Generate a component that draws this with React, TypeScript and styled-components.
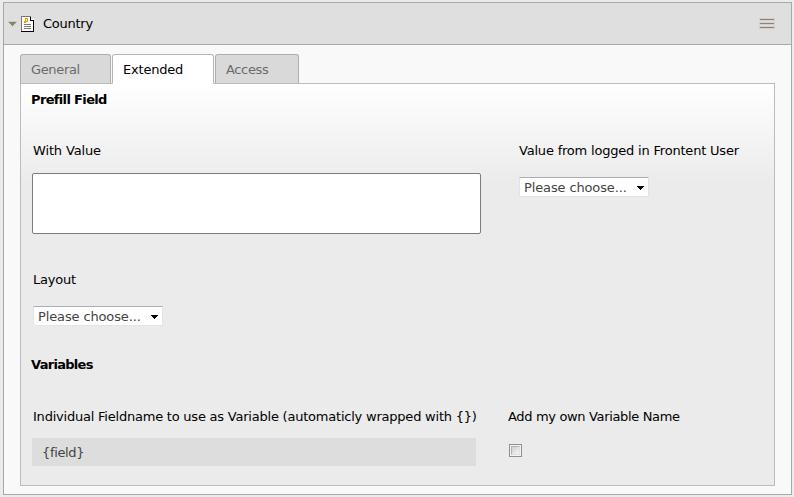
import React from "react";
import styled, { createGlobalStyle } from "styled-components";

const GlobalStyle = createGlobalStyle`
  *, *::before, *::after { box-sizing: border-box; }
  body {
    margin: 0;
    background: #ebebeb;
    color: #000;
    font: 13px/16px Verdana, "DejaVu Sans", sans-serif;
    overflow: hidden;
  }
`;

const Page = styled.main`
  height: 497px;
  padding: 2px 2px 2px 3px;
`;

const Card = styled.section`
  width: 789px;
  height: 493px;
  border: 1px solid #a8a8a8;
  background: #f9f9f9;
`;

const CardHeader = styled.header`
  display: flex;
  align-items: center;
  height: 42px;
  padding: 0 16px 0 4px;
  border-bottom: 1px solid #a8a8a8;
  background: #dfdfdf;
`;

const Title = styled.span<{ $track: number }>`
  flex: 1;
  margin-left: 9px;
  letter-spacing: ${(p) => p.$track}px;
`;

const DocSlot = styled.span`
  display: flex;
  margin-left: 4px;
`;

const Tabs = styled.nav`
  display: flex;
  gap: 1px;
  height: 30px;
  margin: 9px 0 -1px 16px;
  position: relative;
`;

const Tab = styled.button<{ $active?: boolean; $width: number; $track: number }>`
  width: ${(p) => p.$width}px;
  height: 30px;
  padding: 2px 0 0 10px;
  border: 1px solid ${(p) => (p.$active ? "#b5b5b5" : "#aeaeae")};
  border-bottom-color: ${(p) => (p.$active ? "#fff" : "#bcbcbc")};
  border-radius: 3px 3px 0 0;
  background: ${(p) => (p.$active ? "#fff" : "#d9d9d9")};
  color: ${(p) => (p.$active ? "#000" : "#6b6b6b")};
  font: inherit;
  text-align: left;
  letter-spacing: ${(p) => p.$track}px;
`;

const Panel = styled.div`
  width: 755px;
  height: 403px;
  margin-left: 16px;
  padding: 8px 0 0 11px;
  border: 1px solid #bcbcbc;
  background: linear-gradient(#fff 0, #ebebeb 100px);
`;

const Heading = styled.h2<{ $track: number }>`
  height: 16px;
  margin: 0 0 0 -1px;
  font-size: 13px;
  font-weight: bold;
  letter-spacing: ${(p) => p.$track}px;
`;

const FieldRow = styled.div<{ $height: number; $top: number; $second?: number }>`
  display: grid;
  grid-template-columns: ${(p) => p.$second ?? 486}px 1fr;
  height: ${(p) => p.$height}px;
  margin-top: ${(p) => p.$top}px;
`;

const Field = styled.div`
  display: flex;
  flex-direction: column;
  align-items: flex-start;
`;

const Label = styled.label<{ $track: number; $gap: number }>`
  height: 16px;
  margin: 0 0 ${(p) => p.$gap}px 1px;
  white-space: nowrap;
  letter-spacing: ${(p) => p.$track}px;
`;

const TextArea = styled.textarea`
  width: 449px;
  height: 61px;
  border: 1px solid #7c7c7c;
  border-radius: 2px;
  background: #fff;
  resize: none;
  outline: none;
`;

const Select = styled.button`
  display: flex;
  align-items: center;
  width: 130px;
  height: 20px;
  margin-left: 1px;
  padding: 1px 4px 0;
  border: 1px solid #e2e3ea;
  border-top-color: #abadb3;
  border-radius: 1px;
  background: #fff;
  color: #444;
  font: inherit;
  letter-spacing: -0.13px;
  white-space: nowrap;
`;

const SelectText = styled.span`
  width: 113px;
  text-align: left;
`;

const ReadOnly = styled.div`
  width: 444px;
  height: 28px;
  padding: 7px 10px 5px;
  background: #ddd;
  color: #444;
  letter-spacing: -0.35px;
`;

const Checkbox = styled.span`
  width: 13px;
  height: 13px;
  margin-left: 2px;
  border: 1px solid #8e8f8f;
  padding: 1px;
  background: #f4f4f4;

  &::before {
    content: "";
    display: block;
    width: 9px;
    height: 9px;
    border: 1px solid;
    border-color: #aeb3b9 #e0e2e4 #e0e2e4 #aeb3b9;
    background: linear-gradient(135deg, #cbcfd5, #f6f6f6);
  }
`;

const CollapseArrow = () => (
  <svg width="9" height="6" viewBox="0 0 9 6" shapeRendering="crispEdges">
    <path d="M0 0h9v2h-1v1h-1v1h-1v1h-1v1h-1v-1h-1v-1h-1v-1h-1v-1h-1z" fill="#cecbc6" />
    <path d="M1 1h7v1h-1v1h-1v1h-1v1h-1v-1h-1v-1h-1v-1h-1z" fill="#898376" />
  </svg>
);

const DocumentIcon = () => (
  <svg width="13" height="16" viewBox="0 0 13 16" shapeRendering="crispEdges">
    <path d="M0 0h10v1h1v1h1v1h1v13h-13z" fill="#fff" />
    <path d="M0 0h10v1h-9v14h-1z" fill="#777" />
    <path d="M12 4h1v12h-13v-1h12zM9 1h1v3h3v1h-4z" fill="#000" />
    <path d="M10 1h1v1h1v1h-2z" fill="#ddd" />
    <path d="M4 2h3v4h-2v1h-2v-2h1zM5 3v2h1v-2z" fill="#f49700" fillRule="evenodd" />
    <path d="M3 8h7v1h-7zM3 10h7v1h-7zM3 12h7v1h-7z" fill="#777" />
  </svg>
);

const MenuIcon = () => (
  <svg width="16" height="12" viewBox="0 0 16 12" shapeRendering="crispEdges">
    <path d="M0 0h16v3h-16zM0 4h16v3h-16zM0 8h16v3h-16z" fill="#d3d0cb" />
    <path d="M1 1h14v1h-14zM1 5h14v1h-14zM1 9h14v1h-14z" fill="#8c8475" />
  </svg>
);

const Dropdown = () => (
  <Select type="button">
    <SelectText>Please choose...</SelectText>
    <svg width="7" height="4" viewBox="0 0 7 4" shapeRendering="crispEdges">
      <path d="M0 0h7v1h-1v1h-1v1h-1v1h-1v-1h-1v-1h-1v-1h-1z" fill="#000" />
    </svg>
  </Select>
);

export default function App() {
  return (
    <>
      <GlobalStyle />
      <Page>
        <Card>
          <CardHeader>
            <CollapseArrow />
            <DocSlot><DocumentIcon /></DocSlot>
            <Title $track={-0.25}>Country</Title>
            <MenuIcon />
          </CardHeader>
          <Tabs>
            <Tab $width={91} $track={-0.35}>General</Tab>
            <Tab $width={102} $track={-0.2} $active>Extended</Tab>
            <Tab $width={84} $track={-0.35}>Access</Tab>
          </Tabs>
          <Panel>
            <Heading $track={-0.65}>Prefill Field</Heading>
            <FieldRow $top={35} $height={129}>
              <Field>
                <Label $track={-0.15} $gap={14}>With Value</Label>
                <TextArea aria-label="With Value" />
              </Field>
              <Field>
                <Label $track={-0.2} $gap={18}>Value from logged in Frontent User</Label>
                <Dropdown />
              </Field>
            </FieldRow>
            <FieldRow $top={0} $height={85}>
              <Field>
                <Label $track={-0.2} $gap={18}>Layout</Label>
                <Dropdown />
              </Field>
            </FieldRow>
            <Heading $track={-0.7}>Variables</Heading>
            <FieldRow $top={36} $height={57} $second={475}>
              <Field>
                <Label $track={-0.22} $gap={13}>
                  Individual Fieldname to use as Variable (automaticly wrapped with {"{}"})
                </Label>
                <ReadOnly>{"{field}"}</ReadOnly>
              </Field>
              <Field>
                <Label $track={-0.34} $gap={19}>Add my own Variable Name</Label>
                <Checkbox role="checkbox" aria-checked={false} />
              </Field>
            </FieldRow>
          </Panel>
        </Card>
      </Page>
    </>
  );
}
